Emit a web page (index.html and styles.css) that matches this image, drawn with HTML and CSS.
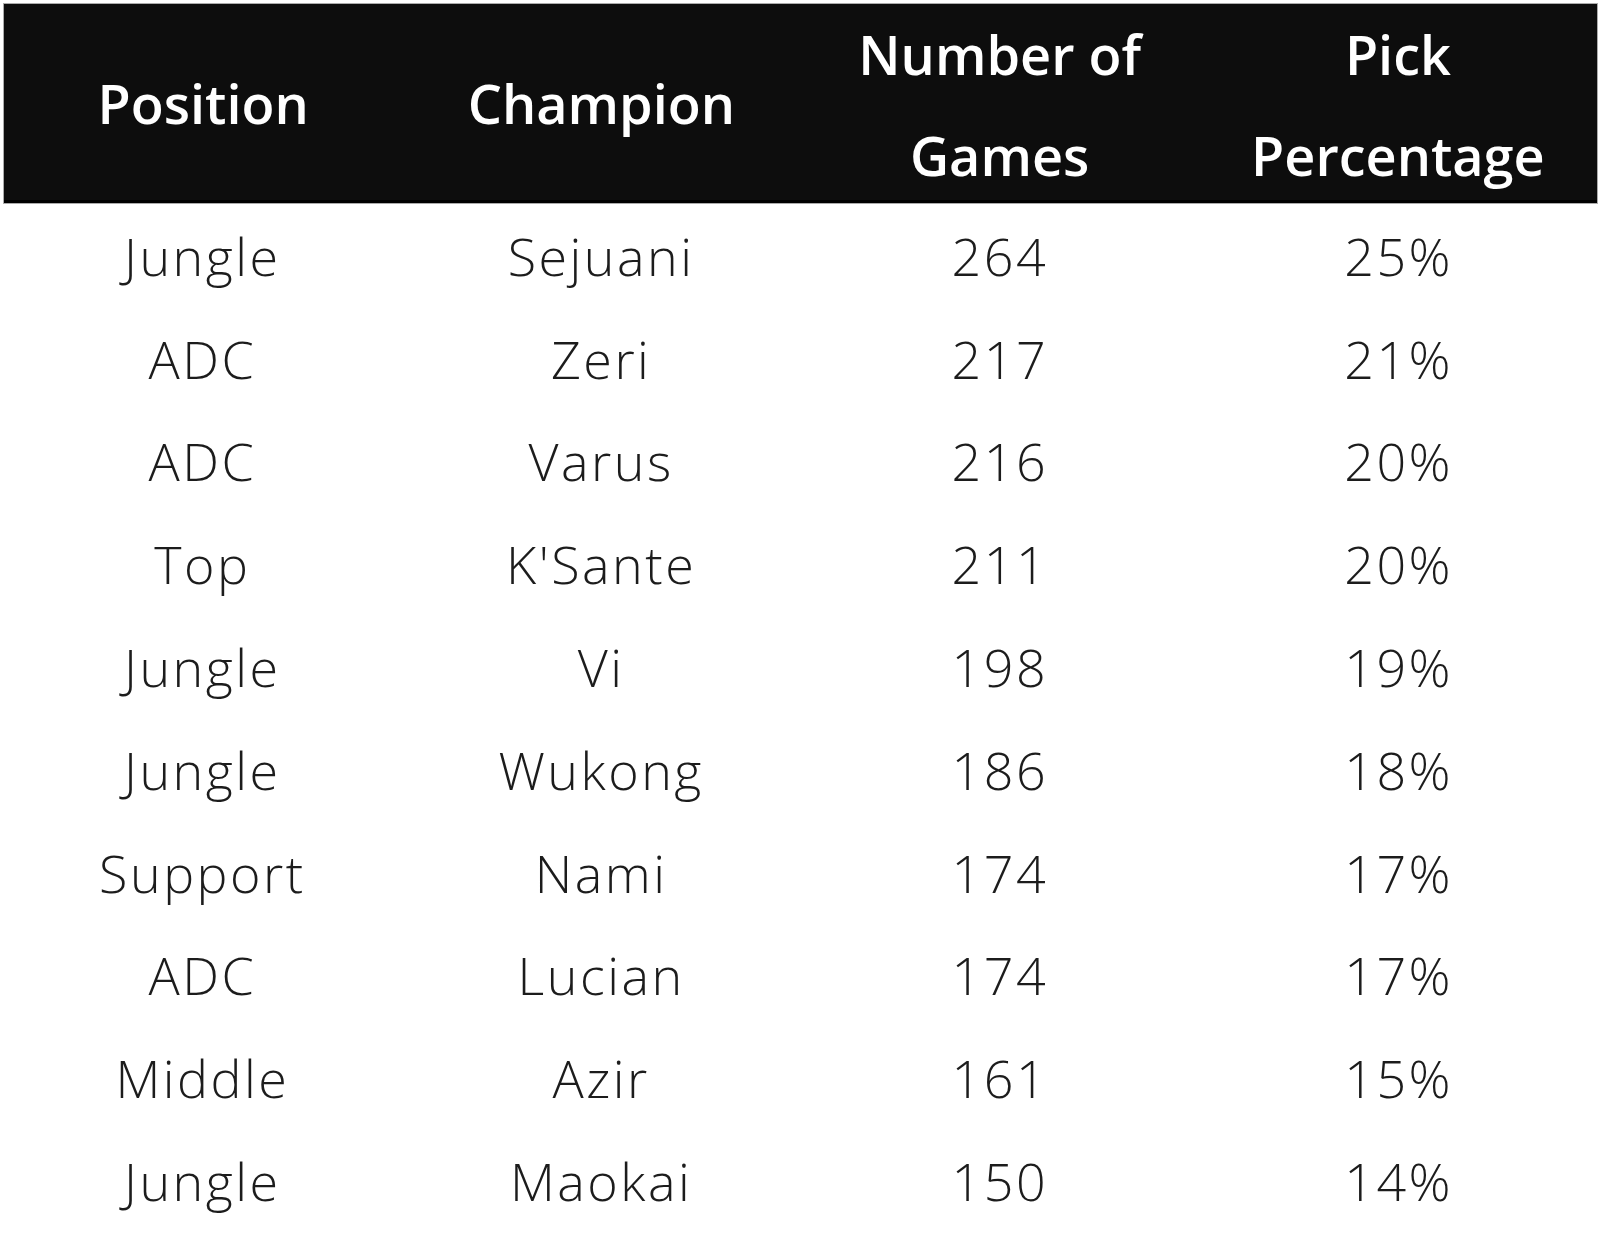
FILE: index.html
```html
<!DOCTYPE html>
<html>
<head>
<meta charset="utf-8">
<link rel="stylesheet" href="styles.css">
</head>
<body>
<div class="table">
  <div class="head">
    <div class="hcell single">Position</div>
    <div class="hcell single">Champion</div>
    <div class="hcell">Number of<br>Games</div>
    <div class="hcell">Pick<br>Percentage</div>
  </div>
  <div class="body">
    <div class="row"><div>Jungle</div><div>Sejuani</div><div>264</div><div>25%</div></div>
    <div class="row"><div>ADC</div><div>Zeri</div><div>217</div><div>21%</div></div>
    <div class="row"><div>ADC</div><div>Varus</div><div>216</div><div>20%</div></div>
    <div class="row"><div>Top</div><div>K'Sante</div><div>211</div><div>20%</div></div>
    <div class="row"><div>Jungle</div><div>Vi</div><div>198</div><div>19%</div></div>
    <div class="row"><div>Jungle</div><div>Wukong</div><div>186</div><div>18%</div></div>
    <div class="row"><div>Support</div><div>Nami</div><div>174</div><div>17%</div></div>
    <div class="row"><div>ADC</div><div>Lucian</div><div>174</div><div>17%</div></div>
    <div class="row"><div>Middle</div><div>Azir</div><div>161</div><div>15%</div></div>
    <div class="row"><div>Jungle</div><div>Maokai</div><div>150</div><div>14%</div></div>
  </div>
</div>
</body>
</html>
```
FILE: styles.css
```css
html, body {
  margin: 0;
  padding: 0;
  background: #ffffff;
}
body {
  padding: 3px 0 0 3px;
  font-family: "Open Sans", "Noto Sans", sans-serif;
}
.table {
  width: 1595px;
}
.head {
  display: grid;
  grid-template-columns: repeat(4, 1fr);
  align-items: center;
  background: #0d0d0d;
  border: 1px solid #ababab;
  box-shadow: inset 0 -3px 0 #000;
  height: 201px;
  box-sizing: border-box;
  color: #ffffff;
}
.hcell {
  text-align: center;
  font-size: 54px;
  font-weight: 600;
  line-height: 101px;
}
.hcell.single {
  padding-bottom: 4px;
}
.row {
  display: grid;
  grid-template-columns: repeat(4, 1fr);
  height: 102.8px;
  align-items: center;
  text-align: center;
  font-size: 52px;
  font-weight: 300;
  letter-spacing: 2.5px;
  color: #1c1c1c;
}
```
